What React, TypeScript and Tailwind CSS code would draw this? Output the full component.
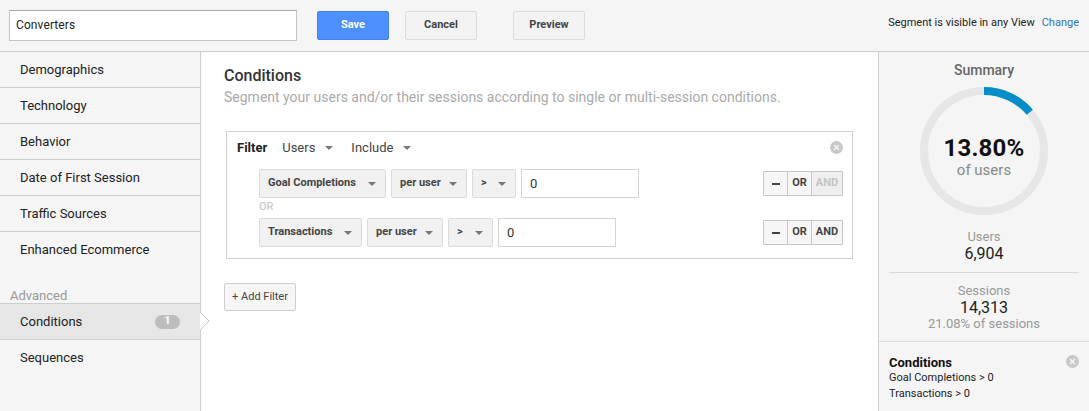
import React from 'react';

const navItems = ['Demographics', 'Technology', 'Behavior', 'Date of First Session', 'Traffic Sources'];

const Caret: React.FC<{ className?: string }> = ({ className = '' }) => (
  <span className={`inline-block w-0 h-0 border-x-[4px] border-x-transparent border-t-[4px] border-t-[#777] ${className}`} />
);

const CloseDot: React.FC = () => (
  <svg width="13" height="13" viewBox="0 0 13 13" className="block">
    <circle cx="6.5" cy="6.5" r="6.5" fill="#c8c8c8" />
    <path d="M4 4l5 5M9 4l-5 5" stroke="#f5f5f5" strokeWidth="1.6" />
  </svg>
);

const SelectBox: React.FC<{ label: string; width: string }> = ({ label, width }) => (
  <div className={`h-[29px] ${width} justify-between flex items-center pl-[8px] pr-[9px] bg-[#f1f1f1] border border-[#dcdcdc] rounded-[2px] text-[11px] font-bold text-[#444]`}>
    <span className="-mt-[1px]">{label}</span>
    <Caret className="mt-[1px]" />
  </div>
);

const LogicButtons: React.FC<{ andDisabled?: boolean }> = ({ andDisabled }) => (
  <div className="flex h-[25px] border border-[#c6c6c6] rounded-[1px] text-[11px] font-bold text-[#444] bg-[#f6f6f6]">
    <div className="w-[24px] flex items-center justify-center border-r border-[#c6c6c6]">
      <span className="w-[8px] h-[2px] bg-[#444]" />
    </div>
    <div className="w-[24px] flex items-center justify-center border-r border-[#c6c6c6]">OR</div>
    <div className={`w-[30px] flex items-center justify-center ${andDisabled ? 'text-[#c4c4c4] bg-[#efefef]' : ''}`}>AND</div>
  </div>
);

const ConditionRow: React.FC<{ metric: string; metricWidth: string; opWidth: string; andDisabled?: boolean }> = ({ metric, metricWidth, opWidth, andDisabled }) => (
  <div className="flex items-center">
    <div className="flex items-center gap-[5px]">
      <SelectBox label={metric} width={metricWidth} />
      <SelectBox label="per user" width="w-[76px]" />
      <SelectBox label=">" width={opWidth} />
      <div className="h-[29px] w-[118px] bg-white border border-[#d4d4d4] flex items-center pl-[8px] text-[13px] text-[#333]">0</div>
    </div>
    <div className="ml-auto mr-[9px]">
      <LogicButtons andDisabled={andDisabled} />
    </div>
  </div>
);

const Ring: React.FC = () => {
  const r = 60;
  const circumference = 2 * Math.PI * r;
  const arc = circumference * 0.138;
  return (
    <svg width="128" height="128" viewBox="0 0 128 128" className="block">
      <circle cx="64" cy="64" r={r} fill="none" stroke="#e6e6e6" strokeWidth="8" />
      <circle
        cx="64"
        cy="64"
        r={r}
        fill="none"
        stroke="#058dc7"
        strokeWidth="8"
        strokeDasharray={`${arc} ${circumference}`}
        transform="rotate(-90 64 64)"
      />
    </svg>
  );
};

export default function App() {
  return (
    <div className="w-[1089px] h-[411px] overflow-hidden flex flex-col bg-white font-['Roboto',sans-serif] text-[#222]">
      {/* Top bar */}
      <div className="h-[52px] shrink-0 flex items-center bg-[#f5f5f5] border-b border-[#cfcfcf] pb-[1px]">
        <div className="ml-[9px] w-[288px] h-[31px] bg-white border border-[#c4c4c4] border-t-[#a8a8a8] flex items-center pl-[6px] text-[12px] tracking-[0.1px] text-[#222]">
          Converters
        </div>
        <div className="ml-[20px] w-[72px] h-[29px] flex items-center justify-center rounded-[2px] bg-[#4d90fe] border border-[#3f7fe8] text-white text-[11px] font-bold">
          Save
        </div>
        <div className="ml-[16px] w-[72px] h-[29px] flex items-center justify-center rounded-[2px] bg-[#f3f3f3] border border-[#dcdcdc] text-[#444] text-[11px] font-bold">
          Cancel
        </div>
        <div className="ml-[36px] w-[72px] h-[29px] flex items-center justify-center rounded-[2px] bg-[#f3f3f3] border border-[#dcdcdc] text-[#444] text-[11px] font-bold">
          Preview
        </div>
        <div className="ml-auto mr-[10px] -mt-[4px] text-[11px] text-[#222] flex gap-[7px]">
          <span>Segment is visible in any View</span>
          <span className="text-[#2f74b5]">Change</span>
        </div>
      </div>

      <div className="flex flex-1 min-h-0">
        {/* Sidebar */}
        <div className="w-[201px] shrink-0 bg-[#f5f5f5] border-r border-[#cfcfcf] flex flex-col">
          {navItems.map(item => (
            <div key={item} className="h-[36px] shrink-0 flex items-center pl-[20px] border-b border-[#cfcfcf] text-[13px] text-[#222] pt-[1px]">
              {item}
            </div>
          ))}
          <div className="h-[36px] shrink-0 flex items-center pl-[20px] text-[13px] text-[#222] pb-[1px]">Enhanced Ecommerce</div>
          <div className="h-[35px] shrink-0 pl-[10px] pt-[20px] text-[13px] leading-[16px] text-[#999]">Advanced</div>
          <div className="relative h-[37px] shrink-0 flex items-center pl-[20px] pr-[20px] bg-[#e6e6e6] border-y border-[#cfcfcf] text-[13px] text-[#222]">
            Conditions
            <span className="ml-auto w-[25px] h-[14px] rounded-full bg-[#bdbdbd] text-white text-[11px] font-bold flex items-center justify-center">1</span>
            <svg width="10" height="20" viewBox="0 0 10 20" className="absolute left-[200px] top-[7px]">
              <path d="M0 1L9 10L0 19Z" fill="#fff" />
              <path d="M0 1L9 10L0 19" fill="none" stroke="#c4c4c4" />
            </svg>
          </div>
          <div className="h-[36px] shrink-0 flex items-center pl-[20px] text-[13px] text-[#222] pb-[1px]">Sequences</div>
        </div>

        {/* Main */}
        <div className="w-[677px] shrink-0 bg-white pl-[23px] pt-[15px]">
          <div className="text-[16px] font-medium text-[#333] leading-[18px]">Conditions</div>
          <div className="mt-[4px] text-[14px] text-[#aaa] leading-[16px]">
            Segment your users and/or their sessions according to single or multi-session conditions.
          </div>

          <div className="mt-[26px] ml-[2px] w-[627px] h-[128px] border border-[#cfcfcf] flex flex-col">
            <div className="flex items-center h-[31px] pl-[10px] pr-[9px] text-[13px]">
              <span className="font-bold text-[#222]">Filter</span>
              <span className="ml-[15px] text-[#444]">Users</span>
              <Caret className="ml-[10px]" />
              <span className="ml-[18px] text-[#444]">Include</span>
              <Caret className="ml-[10px]" />
              <span className="ml-auto"><CloseDot /></span>
            </div>
            <div className="pl-[32px] mt-[6px]">
              <ConditionRow metric="Goal Completions" metricWidth="w-[127px]" opWidth="w-[44px]" andDisabled />
              <div className="h-[20px] flex items-center text-[11px] font-medium text-[#ccc] pb-[2px]">OR</div>
              <ConditionRow metric="Transactions" metricWidth="w-[103px]" opWidth="w-[45px]" />
            </div>
          </div>

          <div className="mt-[24px] w-[72px] h-[28px] flex items-center justify-center rounded-[2px] bg-[#f6f6f6] border border-[#cfcfcf] text-[11px] text-[#444]">
            + Add Filter
          </div>
        </div>

        {/* Summary */}
        <div className="flex-1 bg-[#f5f5f5] border-l border-[#cfcfcf] flex flex-col">
          <div className="flex flex-col items-center">
            <div className="mt-[10px] text-[14px] font-medium text-[#666] leading-[16px]">Summary</div>
            <div className="relative mt-[9px]">
              <Ring />
              <div className="absolute inset-0 flex flex-col items-center justify-center">
                <div className="text-[24px] font-bold text-[#111] leading-[26px] tracking-[0.2px] mt-[11px]">13.80%</div>
                <div className="text-[15px] text-[#888] leading-[18px]">of users</div>
              </div>
            </div>
            <div className="mt-[14px] text-[13px] text-[#999] leading-[16px]">Users</div>
            <div className="text-[16px] text-[#222] leading-[18px]">6,904</div>
          </div>
          <div className="mx-[10px] mt-[9px] border-t border-[#d8d8d8]" />
          <div className="flex flex-col items-center mt-[10px]">
            <div className="text-[13px] text-[#999] leading-[16px]">Sessions</div>
            <div className="text-[16px] text-[#222] leading-[18px]">14,313</div>
            <div className="text-[13px] text-[#999] leading-[16px] -mt-[1px]">21.08% of sessions</div>
          </div>
          <div className="mt-[9px] border-t border-[#d8d8d8] flex-1 relative pl-[10px] pt-[14px]">
            <div className="text-[13px] font-bold text-[#111] leading-[14px]">Conditions</div>
            <div className="text-[11px] text-[#222] leading-[16px]">Goal Completions &gt; 0</div>
            <div className="text-[11px] text-[#222] leading-[16px]">Transactions &gt; 0</div>
            <span className="absolute right-[10px] top-[13px]"><CloseDot /></span>
          </div>
        </div>
      </div>
    </div>
  );
}
